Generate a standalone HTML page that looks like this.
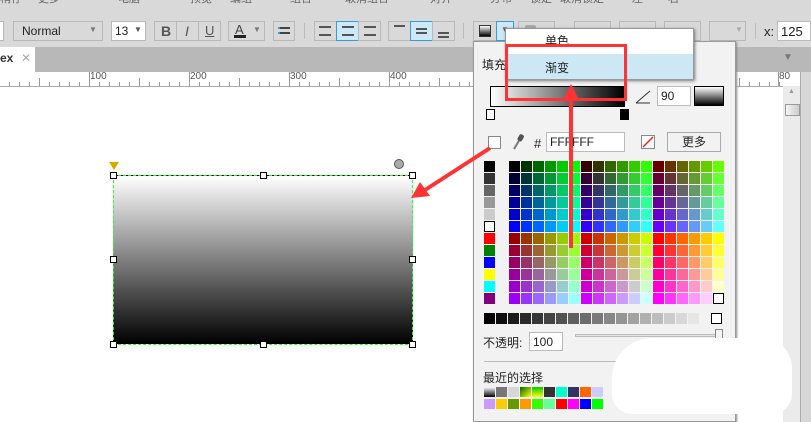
<!DOCTYPE html>
<html><head><meta charset="utf-8">
<style>
*{margin:0;padding:0;box-sizing:border-box}
body{width:811px;height:422px;overflow:hidden;position:relative;background:#fff;font-family:"Liberation Sans","Noto Sans CJK SC",sans-serif;font-size:12px;color:#222}
.a{position:absolute}
.btn{position:absolute;top:21px;height:20px;border:1px solid #b8b8b8;background:#d9d9d9}
.sel{background:#cde8f7;border-color:#3a9bdb}
.cell{position:absolute;width:11px;height:11px}
.h{position:absolute;width:7px;height:7px;border:1px solid #000;background:#fff}
</style></head><body>
<div class="a" style="left:0;top:0;width:811px;height:47px;background:#d9d9d9"></div>
<div class="a" style="left:0;top:-10px;width:811px;font-size:11px;color:#666;white-space:nowrap">
<span style="position:absolute;left:0">稍存</span><span style="position:absolute;left:38px">更多</span><span style="position:absolute;left:118px">电脑</span><span style="position:absolute;left:190px">预览</span><span style="position:absolute;left:230px">编组</span><span style="position:absolute;left:290px">组合</span><span style="position:absolute;left:345px">取消组合</span><span style="position:absolute;left:430px">对齐</span><span style="position:absolute;left:490px">分布</span><span style="position:absolute;left:530px">锁定</span><span style="position:absolute;left:560px">取消锁定</span><span style="position:absolute;left:632px">左</span><span style="position:absolute;left:668px">右</span></div>
<div class="btn" style="left:-10px;width:14px;background:#fff"></div>
<div class="btn" style="left:13px;width:90px"><span class="a" style="left:8px;top:2px;font-size:12px">Normal</span><span class="a" style="left:75px;top:3px;font-size:8px;color:#777">▼</span></div>
<div class="btn" style="left:111px;width:35px;background:#fff"><span class="a" style="left:3px;top:2px">13</span><span class="a" style="left:22px;top:3px;font-size:8px;color:#555">▼</span></div>
<div class="btn" style="left:154px;width:23px"><b class="a" style="left:6px;top:1px;font-size:14px;color:#555">B</b></div>
<div class="btn" style="left:176px;width:23px"><i class="a" style="left:8px;top:1px;font-size:14px;color:#555">I</i></div>
<div class="btn" style="left:198px;width:23px"><u class="a" style="left:6px;top:1px;font-size:13px;color:#555">U</u></div>
<div class="btn" style="left:228px;width:37px"><span class="a" style="left:6px;top:0;font-size:13px;color:#444">A</span><div class="a" style="left:5px;top:13px;width:12px;height:3px;background:#222"></div><span class="a" style="left:24px;top:3px;font-size:8px;color:#777">▼</span></div>
<div class="btn" style="left:273px;width:22px"><div class="a" style="left:5px;top:5px;width:11px;height:7px;border-top:2px solid #444;border-bottom:2px solid #444"></div><div class="a" style="left:4px;top:5px;width:2px;height:7px;border-top:2px solid #3a9bdb;border-bottom:2px solid #3a9bdb"></div></div>
<div class="a" style="left:304px;top:23px;width:1px;height:16px;background:#bbb"></div>
<div class="btn" style="left:314px;width:23px"><div class="a" style="left:4px;top:4px;width:12px;height:10px;border-top:2px solid #555;border-bottom:2px solid #555"></div></div>
<div class="btn sel" style="left:336px;width:23px"><div class="a" style="left:5px;top:4px;width:12px;height:10px;border-top:2px solid #555;border-bottom:2px solid #555"></div></div>
<div class="btn" style="left:358px;width:23px"><div class="a" style="left:5px;top:4px;width:12px;height:10px;border-top:2px solid #555;border-bottom:2px solid #555"></div></div>
<div class="btn" style="left:388px;width:23px"><div class="a" style="left:5px;top:3px;width:11px;height:2px;background:#555"></div></div>
<div class="btn sel" style="left:410px;width:23px"><div class="a" style="left:5px;top:6px;width:11px;height:6px;border-top:2px solid #555;border-bottom:2px solid #555"></div></div>
<div class="btn" style="left:432px;width:23px"><div class="a" style="left:5px;top:10px;width:11px;height:6px;border-top:2px solid #555;border-bottom:2px solid #555"></div></div>
<div class="a" style="left:463px;top:23px;width:1px;height:16px;background:#bbb"></div>
<div class="btn" style="left:473px;width:24px"><div class="a" style="left:5px;top:3px;width:12px;height:12px;border:1px solid #333;background:linear-gradient(#fff,#000)"></div></div>
<div class="btn sel" style="left:496px;width:18px"><span class="a" style="left:4px;top:3px;font-size:8px;color:#555">▼</span></div>
<div class="btn" style="left:518px;width:37px"><div class="a" style="left:6px;top:3px;width:11px;height:11px;background:#aaa;border-radius:2px"></div></div>
<div class="btn" style="left:574px;width:37px"></div>
<div class="btn" style="left:619px;width:37px"></div>
<div class="btn" style="left:664px;width:37px"></div>
<div class="btn" style="left:709px;width:37px"><span class="a" style="left:25px;top:3px;font-size:8px;color:#aaa">▼</span></div>
<div class="a" style="left:755px;top:23px;width:1px;height:16px;background:#bbb"></div>
<span class="a" style="left:764px;top:24px;font-size:13px">x:</span>
<div class="a" style="left:777px;top:21px;width:34px;height:20px;background:#fff;border:1px solid #bbb"><span class="a" style="left:3px;top:2px;font-size:13px">125</span></div>
<div class="a" style="left:0;top:47px;width:811px;height:25px;background:#b8b8b8"></div>
<div class="a" style="left:0;top:47px;width:35px;height:25px;background:#fff"><span class="a" style="left:0;top:4px;font-size:12px;font-weight:bold;color:#333">ex</span><span class="a" style="left:21px;top:4px;color:#aaa;font-size:12px">✕</span></div>
<span class="a" style="left:783px;top:52px;font-size:10px;color:#777">▼</span>
<div id="ruler" class="a" style="left:0;top:72px;width:783px;height:15px;background:#fff;border-bottom:1px solid #aaa"></div>
<div class="a" style="left:783px;top:86px;width:18px;height:336px;background:#ebebeb"></div>
<div class="a" style="left:785px;top:104px;width:15px;height:12px;background:linear-gradient(90deg,#f5f5f5,#ccc);border:1px solid #999"></div>
<span class="a" style="left:788px;top:88px;font-size:7px;color:#999">▲</span>
<div class="a" style="left:800px;top:72px;width:11px;height:350px;background:#d6d6d6;border-left:1px solid #aaa"></div>
<div class="a" style="left:113px;top:175px;width:300px;height:170px;background:linear-gradient(#fff,#000);border:1px dashed #2f2"></div>
<div class="h" style="left:110px;top:172px"></div><div class="h" style="left:260px;top:172px"></div><div class="h" style="left:409px;top:172px"></div>
<div class="h" style="left:110px;top:256px"></div><div class="h" style="left:409px;top:256px"></div>
<div class="h" style="left:110px;top:341px"></div><div class="h" style="left:260px;top:341px"></div><div class="h" style="left:409px;top:341px"></div>
<div class="a" style="left:109px;top:162px;width:0;height:0;border-left:5px solid transparent;border-right:5px solid transparent;border-top:8px solid #d9a800"></div>
<div class="a" style="left:394px;top:159px;width:10px;height:10px;border-radius:50%;background:#aaa;border:1px solid #555"></div>
<div class="a" style="left:473px;top:41px;width:263px;height:381px;background:#f2f2f2;border:1px solid #999;box-shadow:1px 1px 2px #888"></div>
<span class="a" style="left:482px;top:56px;font-size:12px">填充类型:</span>
<div class="a" style="left:490px;top:86px;width:135px;height:21px;border:1px solid #000;background:linear-gradient(90deg,#fff,#000)"></div>
<div class="a" style="left:486px;top:109px;width:9px;height:11px;background:#fff;border:1px solid #000"></div>
<div class="a" style="left:620px;top:109px;width:9px;height:11px;background:#000;border:1px solid #000"></div>
<svg class="a" style="left:634px;top:89px" width="18" height="16"><path d="M2 14 L16 2 M2 14 L16 14" stroke="#333" fill="none"/></svg>
<div class="a" style="left:657px;top:86px;width:34px;height:20px;background:#fff;border:1px solid #bbb"><span class="a" style="left:3px;top:2px">90</span></div>
<div class="a" style="left:694px;top:86px;width:30px;height:20px;border:1px solid #000;background:linear-gradient(#fff,#000)"></div>
<div class="a" style="left:488px;top:136px;width:13px;height:13px;background:#fff;border:1px solid #888"></div>
<svg class="a" style="left:511px;top:133px" width="14" height="18"><path d="M3 16 L9 6" stroke="#777" stroke-width="2"/><rect x="7" y="1" width="5" height="7" rx="2" fill="#555" transform="rotate(30 9 5)"/></svg>
<span class="a" style="left:534px;top:136px;font-size:13px">#</span>
<div class="a" style="left:546px;top:132px;width:79px;height:20px;background:#fff;border:1px solid #bbb"><span class="a" style="left:3px;top:2px">FFFFFF</span></div>
<svg class="a" style="left:641px;top:135px" width="15" height="15"><rect x=".5" y=".5" width="13" height="13" fill="#fff" stroke="#888"/><path d="M2 12 L12 2" stroke="#e22" stroke-width="1.5"/></svg>
<div class="a" style="left:667px;top:132px;width:54px;height:20px;background:#f2f2f2;border:1px solid #aaa;text-align:center;line-height:18px">更多</div>
<div id="pal"></div>
<span class="a" style="left:483px;top:334px;font-size:12px">不透明:</span>
<div class="a" style="left:529px;top:332px;width:34px;height:19px;background:#fff;border:1px solid #bbb"><span class="a" style="left:3px;top:2px">100</span></div>
<div class="a" style="left:575px;top:334px;width:147px;height:3px;border:1px solid #bbb;background:#e6e6e6"></div>
<div class="a" style="left:715px;top:329px;width:8px;height:12px;background:#f5f5f5;border:1px solid #888"></div>
<div class="a" style="left:484px;top:361px;width:244px;height:1px;background:#bbb"></div>
<span class="a" style="left:483px;top:369px;font-size:12px">最近的选择</span>
<div class="a" style="left:612px;top:338px;width:180px;height:76px;background:#fff;border-radius:40px 30px 20px 20px"></div>
<div class="a" style="left:505px;top:28px;width:189px;height:52px;background:#fff;border:1px solid #999;box-shadow:1px 1px 3px #777"></div>
<span class="a" style="left:545px;top:32px;font-size:12px">单色</span>
<div class="a" style="left:506px;top:54px;width:187px;height:25px;background:#cce8f4"></div>
<span class="a" style="left:545px;top:59px;font-size:12px">渐变</span>
<div class="a" style="left:505px;top:44px;width:122px;height:57px;border:3px solid #f33"></div>
<svg class="a" style="left:0;top:0" width="811" height="422">
<path d="M571 248 L571 96" stroke="#f33" stroke-width="4"/>
<path d="M571 84 L563 100 L579 100 Z" fill="#f33"/>
<path d="M490 148 L425 190" stroke="#f33" stroke-width="4"/>
<path d="M411 198 L420 182 L430 196 Z" fill="#f33"/>
</svg>
<script>
var r=document.getElementById('ruler'),h='';
for(var x=-1;x<783;x+=10){var big=((x+11)%50==0);h+='<div class="a" style="left:'+x+'px;top:'+(big?6:10)+'px;width:1px;height:'+(big?8:4)+'px;background:#999"></div>';}
[[89,100],[189,200],[289,300],[389,400],[778,'80']].forEach(function(p){h+='<div class="a" style="left:'+p[0]+'px;top:0;width:1px;height:14px;background:#999"></div><span class="a" style="left:'+(p[0]+1)+'px;top:-1px;font-size:10px;color:#555">'+p[1]+'</span>';});
r.innerHTML=h;
var v=['00','33','66','99','CC','FF'],s='';
for(var row=0;row<12;row++){
 var b=v[row%6];
 for(var blk=0;blk<3;blk++){var rr=v[(row<6?0:3)+blk];
  for(var g=0;g<6;g++){var c=blk*6+g;
   var col='#'+rr+v[g]+b;
   if(row==11&&c==17)s+='<div class="cell" style="left:'+(509+c*12)+'px;top:'+(161+row*12)+'px;background:#fff;border:1px solid #000"></div>';
   else s+='<div class="cell" style="left:'+(509+c*12)+'px;top:'+(161+row*12)+'px;background:'+col+'"></div>';}}}
var lc=['#000','#333','#666','#999','#ccc','#fff','#f00','#008000','#00f','#ff0','#0ff','#800080'];
lc.forEach(function(c,i){s+='<div class="cell" style="left:484px;top:'+(161+i*12)+'px;background:'+c+(c=='#fff'?';border:1px solid #000':'')+'"></div>';});
for(var i=0;i<19;i++){var gv=Math.round(i*13.5);s+='<div class="cell" style="left:'+(484+i*12)+'px;top:313px;background:rgb('+gv+','+gv+','+gv+')"></div>';}
s+='<div class="cell" style="left:711px;top:313px;background:#fff;border:1px solid #000"></div>';
var r1=['linear-gradient(#fff,#000)','#777','#d6d6d6','linear-gradient(135deg,#060,#ff0)','linear-gradient(#0c0,#ff0)','#333','#0fc','#336','#f60','#ccf'];
var r2=['#c9f','#fc0','#690','#f90','#3f0','#6f9','#f00','#f0f','#00f','#0f0'];
r1.forEach(function(c,i){s+='<div class="cell" style="left:'+(484+i*12)+'px;top:387px;height:10px;background:'+c+'"></div>';});
r2.forEach(function(c,i){s+='<div class="cell" style="left:'+(484+i*12)+'px;top:399px;height:10px;background:'+c+'"></div>';});
document.getElementById('pal').innerHTML=s;
</script>
</body></html>
